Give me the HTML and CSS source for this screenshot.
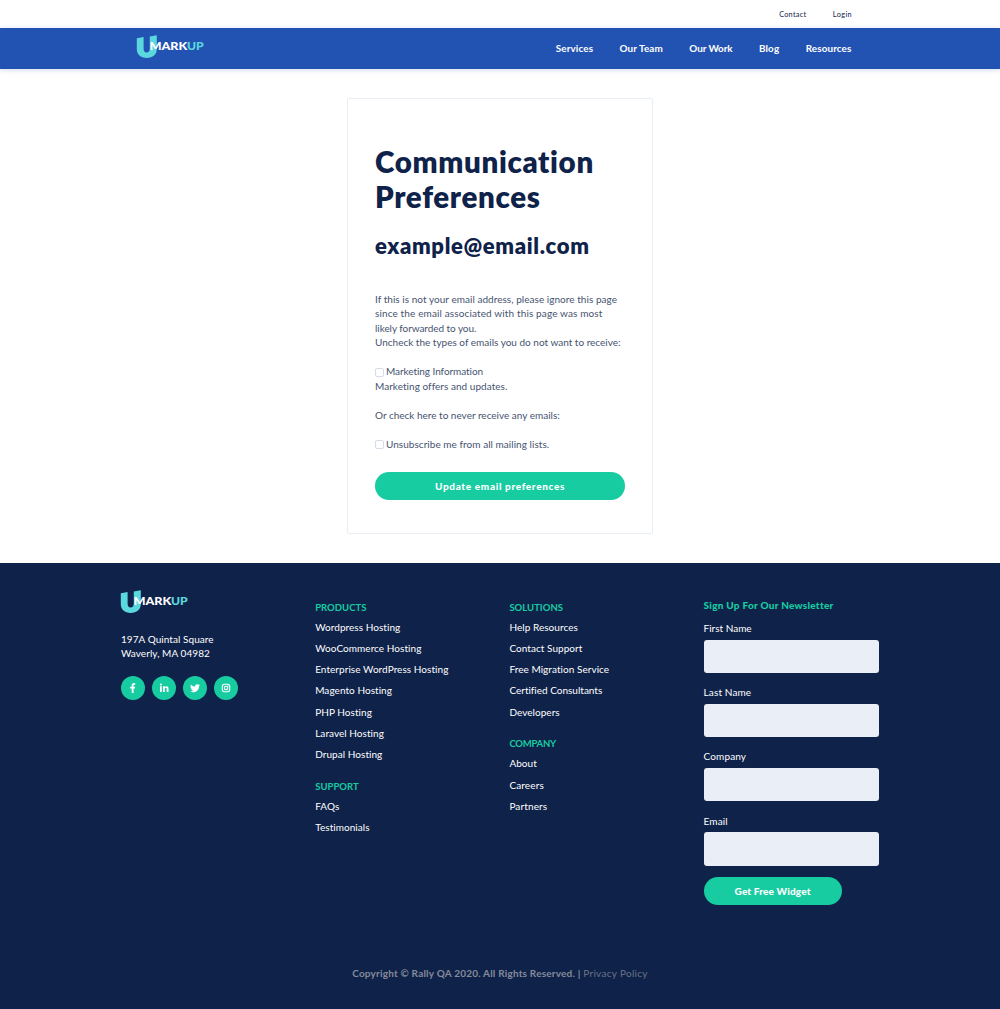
FILE: index.html
```html
<!DOCTYPE html>
<html lang="en">
<head>
<meta charset="utf-8">
<title>Communication Preferences</title>
<link rel="stylesheet" href="styles.css">
</head>
<body>
<div class="topbar"><a>Contact</a><a class="login">Login</a></div>

<header class="header">
  <svg class="logo" viewBox="0 0 70 26">
    <path d="M.8 4.200 7.600 3v11.400c0 2.700 1 4.100 3 4.100s3.200-1.300 3.200-3.900V2.400L20.800 1.200v13.500c0 6-4 9.200-10.100 9.200C4.600 23.900.8 20.800.8 15z" fill="#5bd8de"/>
    <text x="13.400" y="15.800" textLength="38" lengthAdjust="spacingAndGlyphs" class="logo-text" fill="#fff">MARK</text>
    <text x="51" y="15.800" textLength="16.800" lengthAdjust="spacingAndGlyphs" class="logo-text" fill="#5bd8de">UP</text>
  </svg>
  <nav class="nav">
    <a>Services</a><a>Our Team</a><a class="tight">Our Work</a><a>Blog</a><a>Resources</a>
  </nav>
</header>

<main class="main">
  <form class="card">
    <h1>Communication<br>Preferences</h1>
    <h2>example@email.com</h2>
    <div class="copy">
      <p>If this is not your email address, please ignore this page<br><span class="wide">since the email associated with this page was most</span><br><span class="tight">likely forwarded to you.</span></p>
      <p class="snug">Uncheck the types of emails you do not want to receive:</p>
      <label class="check tight"><input type="checkbox">Marketing Information</label>
      <p>Marketing offers and updates.</p>
      <p class="gap snug">Or check here to never receive any emails:</p>
      <label class="check"><input type="checkbox">Unsubscribe me from all mailing lists.</label>
    </div>
    <button class="btn update" type="button">Update email preferences</button>
  </form>
</main>

<footer class="footer">
  <div class="columns">
    <section class="about">
      <svg class="logo" viewBox="0 0 70 26">
        <path d="M.8 4.200 7.600 3v11.400c0 2.700 1 4.100 3 4.100s3.200-1.300 3.200-3.900V2.400L20.800 1.200v13.500c0 6-4 9.200-10.100 9.200C4.600 23.900.8 20.800.8 15z" fill="#5bd8de"/>
        <text x="13.400" y="15.800" textLength="38" lengthAdjust="spacingAndGlyphs" class="logo-text" fill="#fff">MARK</text>
        <text x="51" y="15.800" textLength="16.800" lengthAdjust="spacingAndGlyphs" class="logo-text" fill="#5bd8de">UP</text>
      </svg>
      <address>197A Quintal Square<br>Waverly, MA 04982</address>
      <div class="social">
        <a><svg viewBox="0 0 24 24"><path d="M10.700 17v-4.400H9.200v-1.800h1.500V9.500c0-1.600.9-2.400 2.300-2.400.6 0 1.200.1 1.200.1v1.500h-.7c-.7 0-.9.4-.9.9v1.200h1.600l-.3 1.800h-1.300V17z"/></svg></a>
        <a><svg viewBox="0 0 24 24"><path d="M8 10.300h1.800V16H8zM8.900 7.500a1 1 0 1 1 0 2.100 1 1 0 0 1 0-2.100zM11 10.300h1.700v.8c.3-.5.9-.9 1.700-.9 1.800 0 2.100 1.200 2.100 2.700V16h-1.800v-2.800c0-.7 0-1.500-.9-1.500s-1 .7-1 1.500V16H11z"/></svg></a>
        <a><svg viewBox="0 0 24 24"><path d="M16.900 9c-.3.200-.7.300-1.100.3.400-.2.700-.6.900-1-.4.200-.8.400-1.300.5a2 2 0 0 0-3.400 1.800c-1.700-.1-3.200-.9-4.200-2.100-.5.900-.3 2.100.6 2.700-.3 0-.6-.1-.9-.2 0 1 .7 1.800 1.600 2-.3.100-.6.100-.9 0 .3.800 1 1.400 1.900 1.400-.8.700-1.900 1-3 .9a5.800 5.800 0 0 0 8.900-5.100c.4-.3.700-.7.900-1.200z"/></svg></a>
        <a><svg viewBox="0 0 24 24" class="line"><rect x="8.300" y="8.300" width="7.400" height="7.400" rx="2.200"/><circle cx="12" cy="12" r="1.700"/><circle cx="14" cy="10" r=".1"/></svg></a>
      </div>
    </section>

    <section class="links">
      <h3>PRODUCTS</h3>
      <ul><li>Wordpress Hosting</li><li>WooCommerce Hosting</li><li>Enterprise WordPress Hosting</li><li>Magento Hosting</li><li>PHP Hosting</li><li>Laravel Hosting</li><li>Drupal Hosting</li></ul>
      <h3>SUPPORT</h3>
      <ul><li>FAQs</li><li>Testimonials</li></ul>
    </section>

    <section class="links">
      <h3>SOLUTIONS</h3>
      <ul><li>Help Resources</li><li>Contact Support</li><li>Free Migration Service</li><li class="snug">Certified Consultants</li><li>Developers</li></ul>
      <h3 class="narrow">COMPANY</h3>
      <ul><li>About</li><li class="wide">Careers</li><li class="wide">Partners</li></ul>
    </section>

    <form class="signup">
      <h4>Sign Up For Our Newsletter</h4>
      <label>First Name<input type="text"></label>
      <label class="wide">Last Name<input type="text"></label>
      <label class="wide">Company<input type="text"></label>
      <label class="wide">Email<input type="text"></label>
      <button class="btn widget" type="button">Get Free Widget</button>
    </form>
  </div>
  <p class="copyright"><b>Copyright © Rally QA 2020. All Rights Reserved. |</b> <a>Privacy Policy</a></p>
</footer>
</body>
</html>
```
FILE: styles.css
```css
* { box-sizing: border-box; }

body {
  margin: 0;
  background: #fff;
  color: #0f2249;
  font: 400 10px/14.5px Lato, sans-serif;
  font-variant-ligatures: none;
}

h1, h2, h3, h4, p, ul { margin: 0; padding: 0; }
ul { list-style: none; }

.logo { display: block; width: 70px; height: 26px; }
.logo-text { font: 900 12px Lato, sans-serif; }

.tight { letter-spacing: -0.06px; }
.snug { letter-spacing: 0; }
.wide { letter-spacing: 0.13px; }

/* Header */
.topbar {
  display: flex;
  justify-content: flex-end;
  gap: 26.5px;
  height: 28px;
  padding-right: 148px;
  font-size: 7.3px;
  line-height: 29px;
  letter-spacing: 0.26px;
}
.topbar .login { letter-spacing: 0.4px; }

.header {
  display: flex;
  justify-content: space-between;
  height: 41px;
  padding: 0 148.5px 0 136px;
  background: #2353b2;
  box-shadow: 0 1px 5px rgba(35, 83, 178, 0.22);
}
.header .logo { margin-top: 6px; }

.nav {
  display: flex;
  gap: 26.4px;
  color: #fff;
  font-size: 9.9px;
  font-weight: 700;
  line-height: 41px;
  letter-spacing: 0.13px;
}
.nav .tight { letter-spacing: -0.05px; }

/* Preferences card */
.main { height: 494px; padding-top: 29px; }

.card {
  width: 306px;
  height: 436px;
  margin: 0 auto;
  padding: 46px 27px 0;
  border: 1px solid #e8edf6;
  border-radius: 2px;
}
h1 { font-size: 29.5px; line-height: 34.5px; font-weight: 800; letter-spacing: 0.65px; }
h2 { margin-top: 18px; font-size: 22px; line-height: 28px; font-weight: 800; letter-spacing: 0.65px; }

.copy { margin-top: 31.5px; color: #46536f; letter-spacing: 0.04px; white-space: nowrap; }
.copy .gap { margin-top: 14.5px; }
.check { display: flex; align-items: center; margin-top: 14.5px; }
.check input {
  appearance: none;
  width: 9px;
  height: 9px;
  margin: 2px 2px 0 0;
  border: 1px solid #d5dbe7;
  border-radius: 2px;
  background: #fff;
}

.btn {
  display: block;
  height: 28px;
  padding: 0;
  border: 0;
  border-radius: 14px;
  background: #18cca2;
  color: #fff;
  font: 900 10px/28px Lato, sans-serif;
}
.update { width: 250px; margin-top: 20.5px; letter-spacing: 0.65px; }

/* Footer */
.footer { height: 446px; background: #0f2249; color: #fff; }

.columns {
  display: grid;
  grid-template-columns: repeat(3, 194.2px) 176px;
  height: 403px;
  padding: 27px 0 0 121px;
}
.about .logo { margin-left: -1px; margin-top: -1px; }
address { margin-top: 16.5px; font-style: normal; letter-spacing: 0.06px; }
.social { display: flex; gap: 7px; margin-top: 15px; }
.social a { width: 24px; height: 24px; border-radius: 50%; background: #18cca2; }
.social svg { display: block; fill: #fff; }
.social .line { fill: none; stroke: #fff; stroke-width: 1.1; }

.links { padding-top: 7.5px; letter-spacing: 0.05px; }
.links h3 { color: #18cca2; font-size: 9.5px; line-height: 19px; font-weight: 700; letter-spacing: 0.02px; }
.links h3 + ul { margin-bottom: 11.5px; }
.links .narrow { letter-spacing: -0.25px; }
.links li { line-height: 21.25px; }

.signup { padding-top: 8px; }
.signup h4 { color: #18cca2; font-size: 10px; line-height: 15px; font-weight: 900; letter-spacing: 0.26px; }
.signup label { display: block; height: 64.2px; padding-top: 8px; }
.signup label input {
  display: block;
  width: 175.5px;
  height: 33.5px;
  margin-top: 4px;
  border: 0;
  border-radius: 3px;
  background: #e9eef7;
}
.widget { width: 138px; margin-top: 7.5px; letter-spacing: 0.15px; }

.copyright { color: #858b9b; text-align: center; letter-spacing: 0.2px; }
.copyright a { color: #6c7387; letter-spacing: 0.3px; }
```
